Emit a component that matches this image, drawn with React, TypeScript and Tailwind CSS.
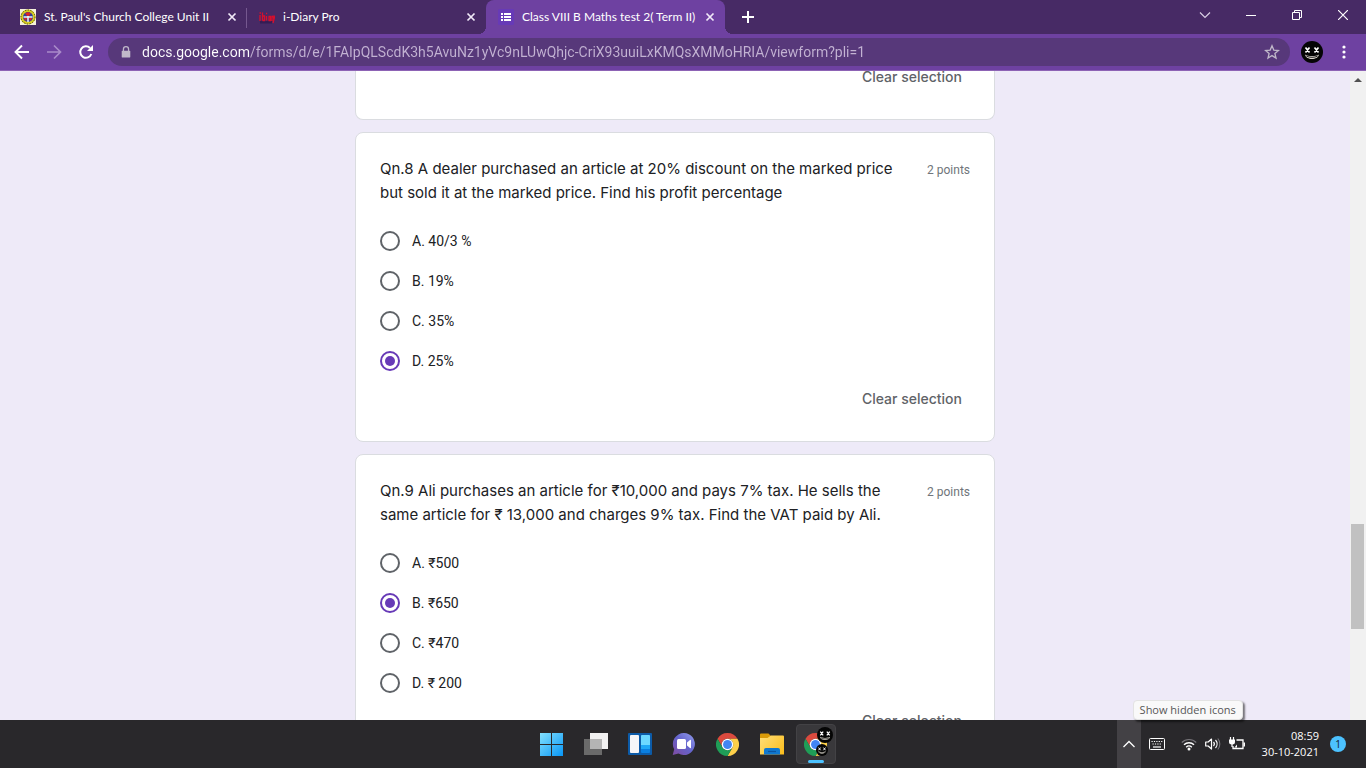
import { useId } from "react";
import type { ReactNode } from "react";

/* ---------- Icons ---------- */

function CrestIcon() {
  return (
    <svg viewBox="0 0 16 16" className="size-4 shrink-0" aria-hidden="true">
      <rect width="16" height="16" fill="#f5f0dc" />
      <circle cx="8" cy="8" r="7.6" fill="#d9cf1f" />
      <circle cx="8" cy="8" r="7" fill="none" stroke="#4a4423" strokeWidth="1" strokeDasharray="1.4 1.3" />
      <circle cx="8" cy="8" r="5" fill="#2b3f9c" />
      <path d="M8 3l3 1.500L8 8 5 4.500zM3.500 9H7l-1 3zM12.500 9H9l1 3z" fill="#d8232a" />
      <path d="M8 7v6M3.500 8h9" stroke="#f5f5f5" strokeWidth="1.500" />
    </svg>
  );
}

function DiaryIcon() {
  return (
    <svg viewBox="0 0 16 16" className="size-4 shrink-0" aria-hidden="true">
      <rect x="1" y="12" width="12" height="2.500" fill="#351c55" />
      <g stroke="#d80f2c" strokeWidth="1.300" fill="none">
        <path d="M1 6v6M.5 4h1.500M3.500 3.500v8M3.500 7h2v4.500h-2M7.500 7v4.500M7 4.500h1.200M10 7.500v4M9.500 7.500h2v4h-2M13 12V7.500h1M14.200 6.500l.6 4M16 6.500l-2 7.500" />
      </g>
    </svg>
  );
}

function FormsIcon() {
  return (
    <svg viewBox="0 0 16 16" className="size-4 shrink-0" aria-hidden="true">
      <rect width="16" height="16" rx="1.500" fill="#673ab7" />
      <path d="M3 4h2v2H3zM6 4h7v2H6zM3 7h2v2H3zM6 7h7v2H6zM3 10h2v2H3zM6 10h7v2H6z" fill="#fff" />
    </svg>
  );
}

function CloseGlyph() {
  return (
    <svg viewBox="0 0 16 16" className="size-4" aria-hidden="true">
      <path d="m4.500 4.500 7 7m0-7-7 7" stroke="#f1eaf8" strokeWidth="1.700" />
    </svg>
  );
}

function ChromeIcon() {
  return (
    <svg viewBox="0 0 48 48" className="size-[23px]" aria-hidden="true">
      <path d="M3.215 12A24 24 0 0 1 44.785 12H24A12 12 0 0 0 13.608 30Z" fill="#db4a3e" />
      <path d="M44.785 12A24 24 0 0 1 24 48L34.392 30A12 12 0 0 0 24 12Z" fill="#fdd04a" />
      <path d="M24 48A24 24 0 0 1 3.215 12L13.608 30A12 12 0 0 0 34.392 30Z" fill="#1f9d57" />
      <circle cx="24" cy="24" r="12" fill="#fff" />
      <circle cx="24" cy="24" r="9.300" fill="#4285f4" />
    </svg>
  );
}

function FaceIcon({ className }: { className: string }) {
  return (
    <svg viewBox="0 0 22 22" className={className} aria-hidden="true">
      <circle cx="11" cy="11" r="11" fill="#050505" />
      <path d="m4.500 6.500 4 5m0-5-4 5M13.500 6.500l4 5m0-5-4 5" stroke="#fff" strokeWidth="1.700" />
      <path d="M4 13.500c3 2 11 2 14 0-1 6-13 6-14 0z" fill="#ded9cf" />
      <path d="M5.500 15.200c3 1.500 8 1.500 11 0" stroke="#222" strokeWidth="1" fill="none" />
    </svg>
  );
}

function StartIcon() {
  const id = useId();
  return (
    <svg viewBox="0 0 24 24" className="size-6" aria-hidden="true">
      <defs>
        <linearGradient id={id} x1="0" y1="0" x2="24" y2="24" gradientUnits="userSpaceOnUse">
          <stop stopColor="#86e3ff" />
          <stop offset="1" stopColor="#0594f5" />
        </linearGradient>
      </defs>
      <path d="M0 1h11v11H0zM12 1h11v11H12zM0 13h11v11H0zM12 13h11v11H12z" fill={`url(#${id})`} />
    </svg>
  );
}

function TaskViewIcon() {
  return (
    <svg viewBox="0 0 24 24" className="size-6" aria-hidden="true">
      <rect x="6" y="1" width="18" height="16" fill="#f1f1f1" />
      <rect x="0" y="7" width="18" height="16" fill="#6a6a6a" />
      <path d="M6 7h12v10H6z" fill="#b4b4b4" />
    </svg>
  );
}

function WidgetsIcon() {
  return (
    <svg viewBox="0 0 24 24" className="size-6" aria-hidden="true">
      <rect x="0" y="1" width="24" height="22" rx="1" fill="#0c5ba8" />
      <rect x="2" y="3" width="9" height="18" rx="1" fill="#f5f6f8" />
      <rect x="13" y="3" width="9" height="18" rx="1" fill="#0a7fe0" />
      <path d="M13 13h9v4h-9z" fill="#1ea7f5" />
      <path d="M14 3h7a1 1 0 0 1 1 1v9h-9V4a1 1 0 0 1 1-1z" fill="#6cd8ff" />
    </svg>
  );
}

function ChatIcon() {
  const id = useId();
  return (
    <svg viewBox="0 0 24 24" className="size-6" aria-hidden="true">
      <defs>
        <linearGradient id={id} x1="2" y1="20" x2="20" y2="2" gradientUnits="userSpaceOnUse">
          <stop stopColor="#7a4fa8" />
          <stop offset=".5" stopColor="#6464cc" />
          <stop offset="1" stopColor="#8a93e8" />
        </linearGradient>
      </defs>
      <path d="M12 1a11 11 0 1 1-5.500 20.600L.7 23l1.500-5.700A11 11 0 0 1 12 1z" fill={`url(#${id})`} />
      <rect x="5" y="7" width="9" height="10" rx="1.500" fill="#fff" />
      <path d="m15 10.500 3-2.500a.7.700 0 0 1 1 .6v6.800a.7.700 0 0 1-1 .6l-3-2.500z" fill="#fff" />
    </svg>
  );
}

function FolderIcon() {
  const id = useId();
  return (
    <svg viewBox="0 0 24 24" className="size-6" aria-hidden="true">
      <defs>
        <linearGradient id={id} x1="0" y1="3" x2="24" y2="22" gradientUnits="userSpaceOnUse">
          <stop stopColor="#ffdf7a" />
          <stop offset="1" stopColor="#fbbd1c" />
        </linearGradient>
      </defs>
      <path d="M0 2.500a1 1 0 0 1 1-1h7.500L11 4v3H0z" fill="#d99a08" />
      <path d="M0 6h7.500L11 3.500h12a1 1 0 0 1 1 1v18H0z" fill={`url(#${id})`} />
      <path d="M4 22.500v-4.500a2 2 0 0 1 2-2h12a2 2 0 0 1 2 2v4.500z" fill="#1078cf" />
      <path d="M8 19.500h8" stroke="#0a54a0" strokeWidth="1.200" />
    </svg>
  );
}

/* ---------- Browser chrome ---------- */

function Tab({ icon, title, active = false, divided = false }: { icon: ReactNode; title: string; active?: boolean; divided?: boolean }) {
  return (
    <div
      className={
        "relative flex h-full w-[239px] min-w-0 shrink items-center gap-1 pr-[7px] pl-3 " +
        (active ? "rounded-t-lg bg-[#6e41a1]" : "")
      }
    >
      {icon}
      <button type="button" role="tab" aria-selected={active} className="min-w-0 flex-1 overflow-hidden pl-1 text-left text-xs whitespace-nowrap text-white">
        {title}
      </button>
      <button type="button" aria-label={`Close ${title}`} className="shrink-0">
        <CloseGlyph />
      </button>
      {divided && <span className="absolute top-2 right-0 h-5 w-px bg-[#75588f]" />}
      {active && (
        <>
          <span className="absolute bottom-0 -left-2 size-2 bg-[radial-gradient(circle_at_0_0,transparent_8px,#6e41a1_8px)]" />
          <span className="absolute -right-2 bottom-0 size-2 bg-[radial-gradient(circle_at_100%_0,transparent_8px,#6e41a1_8px)]" />
        </>
      )}
    </div>
  );
}

function TabStrip() {
  const windowButton = "flex w-[46px] items-center justify-center pb-1";
  return (
    <header className="flex h-[34px] shrink-0 bg-[#472a65] pl-2 font-['Lato',sans-serif]">
      <div role="tablist" className="flex min-w-0">
        <Tab icon={<CrestIcon />} title="St. Paul's Church College Unit II" divided />
        <Tab icon={<DiaryIcon />} title="i-Diary Pro" />
        <Tab icon={<FormsIcon />} title={"Class VIII B Maths test 2( Term II)"} active />
      </div>
      <button type="button" aria-label="New tab" className="ml-[7px] flex w-8 items-center justify-center">
        <svg viewBox="0 0 16 16" className="size-4" aria-hidden="true">
          <path d="M8 2v12M2 8h12" stroke="#fff" strokeWidth="2" />
        </svg>
      </button>
      <div className="ml-auto flex">
        <button type="button" aria-label="Search tabs" className={windowButton}>
          <svg viewBox="0 0 12 12" className="size-3" aria-hidden="true">
            <path d="m1 3.500 5 5 5-5" stroke="#d9cfe4" strokeWidth="1.200" fill="none" />
          </svg>
        </button>
        <button type="button" aria-label="Minimize" className={windowButton}>
          <svg viewBox="0 0 10 10" className="size-2.5" aria-hidden="true">
            <path d="M0 5h10v1H0z" fill="#fff" />
          </svg>
        </button>
        <button type="button" aria-label="Restore" className={windowButton}>
          <svg viewBox="0 0 10 10" className="size-2.5" aria-hidden="true">
            <path d="M.5 2.500h7v7h-7zM2.500 2.500v-2h7v7h-2" stroke="#fff" fill="none" />
          </svg>
        </button>
        <button type="button" aria-label="Close" className={windowButton}>
          <svg viewBox="0 0 10 10" className="size-2.5" aria-hidden="true">
            <path d="m0 0 10 10M10 0 0 10" stroke="#fff" strokeWidth="1.200" />
          </svg>
        </button>
      </div>
    </header>
  );
}

function Toolbar() {
  const navButton = "flex size-8 shrink-0 items-center justify-center";
  return (
    <nav className="flex h-[37px] shrink-0 items-center border-b border-[#8d63b5] bg-[#6e41a1] px-1.5 font-['Roboto',sans-serif]">
      <button type="button" aria-label="Back" className={navButton}>
        <svg viewBox="0 0 16 16" className="size-4" aria-hidden="true">
          <path d="M15 8H2M8 1.500 1.500 8 8 14.500" stroke="#fff" strokeWidth="1.900" fill="none" />
        </svg>
      </button>
      <button type="button" aria-label="Forward" className={navButton}>
        <svg viewBox="0 0 16 16" className="size-4" aria-hidden="true">
          <path d="M1 8h13M8 1.500 14.500 8 8 14.500" stroke="#a98bc9" strokeWidth="1.700" fill="none" />
        </svg>
      </button>
      <button type="button" aria-label="Reload" className={navButton}>
        <svg viewBox="0 0 16 16" className="size-4" aria-hidden="true">
          <path d="M13.300 10A5.700 5.700 0 1 1 12 4" stroke="#fff" strokeWidth="2" fill="none" />
          <path d="M15 1v6H9z" fill="#fff" />
        </svg>
      </button>
      <div className="ml-1.5 flex h-7 min-w-0 flex-1 items-center rounded-full bg-[#57387a] pr-2.5 pl-3">
        <svg viewBox="0 0 12 14" className="h-3 w-3 shrink-0" aria-hidden="true">
          <path d="M3 6V3.800a3 3 0 0 1 6 0V6" stroke="#c0b8c9" strokeWidth="1.500" fill="none" />
          <rect x="1" y="5.500" width="10" height="8" rx="1" fill="#c0b8c9" />
        </svg>
        <input
          aria-label="Address"
          className="ml-2.5 min-w-0 flex-1 bg-[linear-gradient(90deg,#ffffff_107px,#c3b3d3_107px)] bg-clip-text text-sm text-transparent outline-none"
          defaultValue="docs.google.com/forms/d/e/1FAIpQLScdK3h5AvuNz1yVc9nLUwQhjc-CriX93uuiLxKMQsXMMoHRIA/viewform?pli=1"
        />
        <button type="button" aria-label="Bookmark this tab" className="shrink-0">
          <svg viewBox="0 0 16 16" className="size-4" aria-hidden="true">
            <path
              d="m8 1.800 1.800 4.300 4.700.4-3.600 3 1.100 4.600-4-2.500-4 2.500 1.100-4.600-3.600-3 4.700-.4z"
              stroke="#c0b8c9"
              strokeWidth="1.300"
              fill="none"
            />
          </svg>
        </button>
      </div>
      <button type="button" aria-label="Profile" className="ml-1.5 flex size-8 shrink-0 items-center justify-center">
        <FaceIcon className="size-[22px]" />
      </button>
      <button type="button" aria-label="More" className="flex size-8 shrink-0 items-center justify-center">
        <svg viewBox="0 0 4 14" className="h-3.5 w-1" aria-hidden="true">
          <circle cx="2" cy="2" r="1.600" fill="#fff" />
          <circle cx="2" cy="7" r="1.600" fill="#fff" />
          <circle cx="2" cy="12" r="1.600" fill="#fff" />
        </svg>
      </button>
    </nav>
  );
}

/* ---------- Form ---------- */

function ClearSelection() {
  return (
    <div className="flex justify-end">
      <button type="button" className="h-9 px-2 font-['Inter',sans-serif] text-sm font-medium text-[#5f6368]">
        Clear selection
      </button>
    </div>
  );
}

function Question({ title, options, selected }: { title: string; options: string[]; selected: number }) {
  const name = useId();
  const titleId = useId();
  return (
    <section className="rounded-lg border border-[#dadce0] bg-white p-6">
      <div className="flex items-start gap-4 pb-4">
        <h2 id={titleId} className="min-w-0 flex-1 font-['Inter',sans-serif] text-[15px] leading-6 text-[#202124]">
          {title}
        </h2>
        <span className="shrink-0 text-xs leading-[26px] text-[#70757a]">2 points</span>
      </div>
      <div role="radiogroup" aria-labelledby={titleId}>
        {options.map((option, i) => (
          <label key={option} className="flex h-10 items-center gap-3 text-sm text-[#202124]">
            <input
              type="radio"
              name={name}
              defaultChecked={i === selected}
              className="size-5 appearance-none rounded-full border-2 border-[#5f6368] bg-clip-content p-[3px] checked:border-[#673ab7] checked:bg-[#673ab7]"
            />
            {option}
          </label>
        ))}
      </div>
      <ClearSelection />
    </section>
  );
}

function Page() {
  return (
    <div className="flex min-h-0 flex-1 overflow-hidden bg-[#eeeaf8]">
      <main className="h-0 min-w-0 flex-1 font-['Roboto',sans-serif]">
        <div className="mx-auto -mt-3 flex max-w-[640px] flex-col gap-3">
          <section className="rounded-b-lg border border-t-0 border-[#dadce0] bg-white px-6 pb-6">
            <ClearSelection />
          </section>
          <Question
            title="Qn.8 A dealer purchased an article at 20% discount on the marked price but sold it at the marked price. Find his profit percentage"
            options={["A. 40/3 %", "B. 19%", "C. 35%", "D. 25%"]}
            selected={3}
          />
          <Question
            title="Qn.9 Ali purchases an article for ₹10,000 and pays 7% tax. He sells the same article for ₹ 13,000 and charges 9% tax. Find the VAT paid by Ali."
            options={["A. ₹500", "B. ₹650", "C. ₹470", "D. ₹ 200"]}
            selected={1}
          />
        </div>
      </main>
      <div className="flex w-4 flex-col bg-[#f1f1f1] px-px" aria-hidden="true">
        <svg viewBox="0 0 8 4" className="mt-[7px] ml-[3px] h-1 w-2">
          <path d="M4 0 8 4H0z" fill="#505050" />
        </svg>
        <div className="mt-auto mb-[91px] h-[105px] w-[13px] bg-[#c1c1c1]" />
      </div>
    </div>
  );
}

/* ---------- Taskbar ---------- */

function Taskbar() {
  const app = "flex size-10 items-center justify-center";
  return (
    <footer className="grid h-12 shrink-0 grid-cols-[1fr_auto_1fr] items-center bg-[#29282b] text-white">
      <div />
      <div className="flex gap-1 pl-px">
        <button type="button" aria-label="Start" className={app}>
          <StartIcon />
        </button>
        <button type="button" aria-label="Task view" className={app}>
          <TaskViewIcon />
        </button>
        <button type="button" aria-label="Widgets" className={app}>
          <WidgetsIcon />
        </button>
        <button type="button" aria-label="Chat" className={app}>
          <ChatIcon />
        </button>
        <button type="button" aria-label="Google Chrome" className={app}>
          <ChromeIcon />
        </button>
        <button type="button" aria-label="File Explorer" className={app}>
          <FolderIcon />
        </button>
        <button type="button" aria-label="Google Chrome, running" className={app + " relative rounded border border-[#434245] bg-[#39383b]"}>
          <ChromeIcon />
          <FaceIcon className="absolute top-0.5 right-0.5 size-4" />
          <FaceIcon className="absolute right-[7px] bottom-[7px] size-3" />
          <span className="absolute bottom-0 h-[3px] w-4 rounded-full bg-[#4cc2ff]" />
        </button>
      </div>
      <div className="flex h-full items-center justify-end pr-5">
        <div className="relative h-full">
          <button type="button" aria-label="Show hidden icons" className="flex h-full w-6 items-center justify-center bg-[#434145]">
            <svg viewBox="0 0 12 8" className="h-2 w-3" aria-hidden="true">
              <path d="m.5 7 5.500-5.500L11.500 7" stroke="#fff" strokeWidth="1.300" fill="none" />
            </svg>
          </button>
          <div
            role="tooltip"
            className="absolute bottom-full left-4 rounded-sm border border-[#e3e3e3] bg-[#f9f9f9] px-1.5 py-px text-[11px] leading-4 whitespace-nowrap text-[#575757] shadow-[2px_2px_2px_rgba(0,0,0,0.5)]"
          >
            Show hidden icons
          </div>
        </div>
        <button type="button" aria-label="Touch keyboard" className="ml-2">
          <svg viewBox="0 0 16 12" className="h-3 w-4" aria-hidden="true">
            <rect x=".5" y=".5" width="15" height="11" rx="1" stroke="#fff" fill="none" />
            <path d="M2.500 3.500h11M3.500 6h9" stroke="#fff" strokeWidth="1.200" strokeDasharray="1.200 1.200" />
            <path d="M4 9h8" stroke="#fff" strokeWidth="1.200" />
          </svg>
        </button>
        <button type="button" aria-label="Network, volume and battery" className="ml-4 flex gap-2">
          <svg viewBox="0 0 16 14" className="h-3.5 w-4" aria-hidden="true">
            <path d="M.8 5.500a10.200 10.200 0 0 1 14.400 0" stroke="#77757a" strokeWidth="1.200" fill="none" />
            <path d="M3 7.800a7 7 0 0 1 10 0M5.200 10.200a4 4 0 0 1 5.600 0" stroke="#fff" strokeWidth="1.400" fill="none" />
            <circle cx="8" cy="12" r="1.500" fill="#fff" />
          </svg>
          <svg viewBox="0 0 16 14" className="h-3.5 w-4" aria-hidden="true">
            <path d="M.7 5v4h2.500l3.300 3V2L3.200 5z" stroke="#fff" strokeWidth="1.200" fill="none" strokeLinejoin="round" />
            <path d="M8.500 5a3 3 0 0 1 0 4M10.500 3a6 6 0 0 1 0 8" stroke="#fff" strokeWidth="1.200" fill="none" />
            <path d="M12.800 1.500a8.500 8.500 0 0 1 0 11" stroke="#77757a" strokeWidth="1.100" fill="none" />
          </svg>
          <svg viewBox="0 0 16 14" className="h-3.5 w-4" aria-hidden="true">
            <path d="M7.500 3H14v8.500H4V9" stroke="#fff" strokeWidth="1.300" fill="none" />
            <path d="M14.500 5.500H16v4h-1.500zM5.500 10.500l2.500-3v3z" fill="#fff" />
            <path d="M1.500 0v3M4.500 0v3M3 6v4" stroke="#fff" strokeWidth="1.200" />
            <path d="M0 2.500h6v2.500a3 2.500 0 0 1-6 0z" fill="#fff" />
          </svg>
        </button>
        <button type="button" className="ml-[17px] text-right text-[11px] leading-4">
          <time className="block">08:59</time>
          <time className="block">30-10-2021</time>
        </button>
        <button type="button" aria-label="1 notification" className="ml-[11px] flex size-4 items-center justify-center rounded-full bg-[#4cc2ff] text-[10px] text-[#10202b]">
          1
        </button>
      </div>
    </footer>
  );
}

export default function App() {
  return (
    <div className="flex h-screen flex-col overflow-hidden font-['Open_Sans',sans-serif]">
      <TabStrip />
      <Toolbar />
      <Page />
      <Taskbar />
    </div>
  );
}
